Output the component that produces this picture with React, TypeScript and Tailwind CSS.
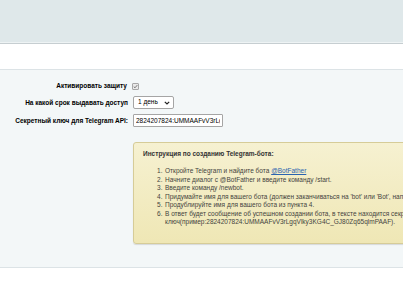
import { useState } from "react";

const steps: React.ReactNode[] = [
  <>
    Откройте Telegram и найдите бота{" "}
    <a className="text-[#2a63b0] underline" href="#botfather">
      @BotFather
    </a>
  </>,
  <>Начните диалог с @BotFather и введите команду /start.</>,
  <>Введите команду /newbot.</>,
  <>
    Придумайте имя для вашего бота (должен заканчиваться на 'bot' или 'Bot',
    например: my_test_bot).
  </>,
  <>Продублируйте имя для вашего бота из пункта 4.</>,
  <>
    В ответ будет сообщение об успешном создании бота, в тексте находится
    секретный
    <br />
    ключ(пример:2824207824:UMMAAFvV3rLgqVlky3KG4C_GJ80Zq65qlmPAAF).
  </>,
];

export default function App() {
  const [enabled, setEnabled] = useState(true);
  const [period, setPeriod] = useState("1");
  const [token, setToken] = useState(
    "2824207824:UMMAAFvV3rLgqVlky3KG4C_GJ80Zq65qlmPAAF",
  );

  return (
    <div className="w-full overflow-hidden bg-white font-['Liberation_Sans',Arial,sans-serif] text-[6.5px] text-black">
      <div className="h-[42px] bg-[#dfe8ea]" />
      <div className="h-px bg-[#eef3f4]" />
      <div className="h-px bg-[#c6ced1]" />
      <div className="h-[25px] bg-white" />

      <div className="border-y border-[#dce3e6] bg-[#f3f7f8] pt-[9px] pb-[23px]">
        <div className="flex h-[14px] items-center">
          <span className="w-[128px] pr-[1px] text-right font-bold">
            Активировать защиту
          </span>
          <label className="ml-[4px] flex items-center">
            <input
              checked={enabled}
              className="peer sr-only"
              onChange={(e) => setEnabled(e.target.checked)}
              type="checkbox"
            />
            <span className="flex h-[7px] w-[7px] items-center justify-center rounded-[1px] border border-[#a7a7a7] bg-[#e9e9e9]">
              {enabled && (
                <svg className="h-[5px] w-[5px]" viewBox="0 0 10 10">
                  <path
                    d="M1.5 5.2 4 7.6 8.6 2.2"
                    fill="none"
                    stroke="#6b6b6b"
                    strokeWidth="1.8"
                  />
                </svg>
              )}
            </span>
          </label>
        </div>

        <div className="mt-[3px] flex h-[13px] items-center">
          <span className="w-[128px] text-right font-bold">
            На какой срок выдавать доступ
          </span>
          <div className="relative ml-[5px] h-[13px] w-[41px]">
            <select
              className="h-full w-full appearance-none rounded-[2px] border border-[#a5a5a5] bg-white pl-[4px] text-[6.5px] leading-none outline-none"
              onChange={(e) => setPeriod(e.target.value)}
              value={period}
            >
              <option value="1">1 день</option>
              <option value="7">7 дней</option>
              <option value="30">30 дней</option>
            </select>
            <svg
              className="pointer-events-none absolute top-[4.5px] right-[4px] h-[4px] w-[6px]"
              viewBox="0 0 6 4"
            >
              <path
                d="M0.8 0.8 3 3 5.2 0.8"
                fill="none"
                stroke="#222"
                strokeWidth="1.2"
              />
            </svg>
          </div>
        </div>

        <div className="mt-[5px] flex h-[13px] items-center">
          <span className="w-[128px] text-right font-bold">
            Секретный ключ для Telegram API:
          </span>
          <input
            className="ml-[5px] h-[13px] w-[90px] rounded-[1px] border border-[#a5a5a5] bg-white px-[2px] text-[6.5px] outline-none"
            onChange={(e) => setToken(e.target.value)}
            value={token}
          />
        </div>

        <div className="mt-[15px] ml-[133px] w-[420px] rounded-[3px] border border-[#d6cc98] bg-gradient-to-b from-[#f6f1d1] to-[#efe7b5] pt-[7px] pb-[16px] pl-[9px] shadow-[0_1px_1px_rgba(0,0,0,0.12)]">
          <p className="font-bold text-[#333] leading-[8px]">
            Инструкция по созданию Telegram-бота:
          </p>
          <ol className="mt-[9px] ml-[14px] text-[#444440] leading-[8.5px]">
            {steps.map((step, i) => (
              <li className="flex whitespace-nowrap" key={i}>
                <span className="w-[8px] shrink-0">{i + 1}.</span>
                <span>{step}</span>
              </li>
            ))}
          </ol>
        </div>
      </div>

      <div className="h-[40px] bg-white" />
    </div>
  );
}
